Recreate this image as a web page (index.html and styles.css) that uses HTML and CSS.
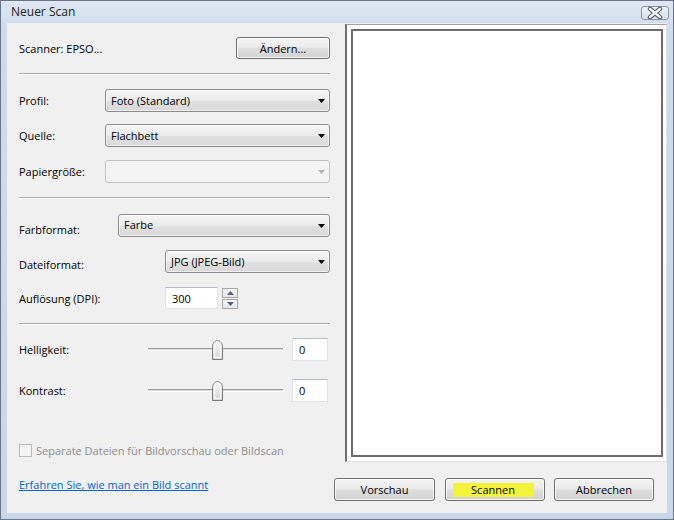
FILE: index.html
```
<!DOCTYPE html>
<html lang="de">
<head>
<meta charset="utf-8">
<title>Neuer Scan</title>
<link rel="stylesheet" href="styles.css">
</head>
<body>
<div class="window">
  <div class="titlebar">
    <span class="title">Neuer Scan</span>
    <span class="close">
      <svg width="28" height="14" viewBox="0 0 28 14">
        <path d="M9 2.8 L19 11.2 M19 2.8 L9 11.2" stroke="#58616d" stroke-width="4.4" stroke-linecap="round"/>
        <path d="M9 2.8 L19 11.2 M19 2.8 L9 11.2" stroke="#ffffff" stroke-width="2.2" stroke-linecap="round"/>
      </svg>
    </span>
  </div>
  <div class="client">
    <div class="main">
      <div class="left">
        <div class="row scanner-row">
          <span class="label">Scanner: EPSO...</span>
          <button class="btn btn-change">Ändern...</button>
        </div>
        <div class="sep sep-a"></div>

        <div class="row row-combo r-profil">
          <span class="label">Profil:</span>
          <div class="combo w-wide"><span class="combo-text">Foto (Standard)</span>
            <svg class="arrow" width="7" height="4" viewBox="0 0 7 4"><path d="M0 0H7L3.5 4Z" fill="#000"/></svg></div>
        </div>
        <div class="row row-combo r-quelle">
          <span class="label">Quelle:</span>
          <div class="combo w-wide"><span class="combo-text">Flachbett</span>
            <svg class="arrow" width="7" height="4" viewBox="0 0 7 4"><path d="M0 0H7L3.5 4Z" fill="#000"/></svg></div>
        </div>
        <div class="row row-combo r-papier">
          <span class="label">Papiergröße:</span>
          <div class="combo combo-disabled w-wide"><span class="combo-text"></span>
            <svg class="arrow" width="7" height="4" viewBox="0 0 7 4"><path d="M0 0H7L3.5 4Z" fill="#b4b4b4"/></svg></div>
        </div>
        <div class="sep sep-b"></div>

        <div class="row row-combo r-farb">
          <span class="label low6">Farbformat:</span>
          <div class="combo w-farb"><span class="combo-text up2">Farbe</span>
            <svg class="arrow" width="7" height="4" viewBox="0 0 7 4"><path d="M0 0H7L3.5 4Z" fill="#000"/></svg></div>
        </div>
        <div class="row row-combo r-datei">
          <span class="label low3">Dateiformat:</span>
          <div class="combo w-datei"><span class="combo-text">JPG (JPEG-Bild)</span>
            <svg class="arrow" width="7" height="4" viewBox="0 0 7 4"><path d="M0 0H7L3.5 4Z" fill="#000"/></svg></div>
        </div>
        <div class="row r-dpi">
          <span class="label dpi-label">Auflösung (DPI):</span>
          <div class="textbox dpi-box">300</div>
          <div class="spinner">
            <span class="spin-btn"><svg width="7" height="4" viewBox="0 0 7 4"><path d="M0 4H7L3.5 0Z" fill="#4d6185"/></svg></span>
            <span class="spin-btn"><svg width="7" height="4" viewBox="0 0 7 4"><path d="M0 0H7L3.5 4Z" fill="#4d6185"/></svg></span>
          </div>
        </div>
        <div class="sep sep-c"></div>

        <div class="row r-hell">
          <span class="label slider-label">Helligkeit:</span>
          <div class="slider">
            <span class="track"></span>
            <svg class="thumb" width="11" height="20" viewBox="0 0 11 20">
              <defs><linearGradient id="tg1" x1="0" x2="0" y1="0" y2="1"><stop offset="0" stop-color="#f7f7f7"/><stop offset="1" stop-color="#d6d6d6"/></linearGradient></defs>
              <path d="M0.5 19.5V6.5C0.5 3.5 3 0.5 5.5 0.5S10.5 3.5 10.5 6.5V19.5Z" fill="url(#tg1)" stroke="#7a7a7a"/>
              <path d="M2.5 17.5V7C2.5 4.8 4 2.6 5.5 2.6S8.5 4.8 8.5 7V17.5Z" fill="none" stroke="#ffffff" stroke-width="1"/>
            </svg>
          </div>
          <div class="textbox val-box">0</div>
        </div>
        <div class="row r-kontrast">
          <span class="label slider-label">Kontrast:</span>
          <div class="slider">
            <span class="track"></span>
            <svg class="thumb" width="11" height="20" viewBox="0 0 11 20">
              <defs><linearGradient id="tg2" x1="0" x2="0" y1="0" y2="1"><stop offset="0" stop-color="#f7f7f7"/><stop offset="1" stop-color="#d6d6d6"/></linearGradient></defs>
              <path d="M0.5 19.5V6.5C0.5 3.5 3 0.5 5.5 0.5S10.5 3.5 10.5 6.5V19.5Z" fill="url(#tg2)" stroke="#7a7a7a"/>
              <path d="M2.5 17.5V7C2.5 4.8 4 2.6 5.5 2.6S8.5 4.8 8.5 7V17.5Z" fill="none" stroke="#ffffff" stroke-width="1"/>
            </svg>
          </div>
          <div class="textbox val-box">0</div>
        </div>

        <div class="row r-check">
          <span class="checkbox"></span>
          <span class="check-label">Separate Dateien für Bildvorschau oder Bildscan</span>
        </div>
      </div>
      <div class="preview">
        <div class="preview-inner"></div>
      </div>
    </div>
    <div class="footer">
      <a class="link" href="#">Erfahren Sie, wie man ein Bild scannt</a>
      <div class="buttons">
        <button class="btn btn-foot b-vor">Vorschau</button>
        <button class="btn btn-foot b-scan"><span class="highlight">Scannen</span></button>
        <button class="btn btn-foot b-abb">Abbrechen</button>
      </div>
    </div>
  </div>
</div>
</body>
</html>
```
FILE: styles.css
```
* { box-sizing: border-box; }

body {
  margin: 0;
  font-family: "Open Sans", "Noto Sans", "DejaVu Sans", sans-serif;
  font-size: 11px;
  color: #000;
  background: #fff;
}

.window {
  width: 674px;
  height: 520px;
  border: 1px solid #6a7684;
  background: linear-gradient(180deg, #dfe8f4 0px, #cddbeb 30px, #c9d7e8 100%);
  display: flex;
  flex-direction: column;
}

.titlebar {
  height: 22px;
  flex: none;
  display: flex;
  align-items: center;
  justify-content: space-between;
  padding-left: 10px;
  padding-right: 4px;
}

.title {
  color: #222;
  font-size: 12px;
  line-height: 16px;
}

.close {
  width: 28px;
  height: 14px;
  margin-top: 1px;
  border: 1px solid #8a96a4;
  border-radius: 3px;
  background: linear-gradient(180deg, #eef2f7, #d6dfea);
  display: flex;
  align-items: center;
  justify-content: center;
}
.close svg { display: block; margin: -1px; }

.client {
  flex: 1;
  margin: 0 6px 6px 6px;
  background: #f0f0f0;
  display: flex;
  flex-direction: column;
}

.main {
  height: 439px;
  flex: none;
  display: flex;
}

.left {
  width: 338px;
  flex: none;
  padding: 14px 15px 0 12px;
  display: flex;
  flex-direction: column;
}

.row {
  display: flex;
  align-items: center;
}

.label {
  line-height: 15px;
  white-space: nowrap;
}
.low6 { margin-top: 8px; }
.low3 { margin-top: 5px; }

.scanner-row {
  height: 22px;
  justify-content: space-between;
}

.btn {
  font-family: inherit;
  font-size: 11px;
  color: #000;
  border: 1px solid #707070;
  border-radius: 3px;
  background: linear-gradient(180deg, #f4f4f4 0%, #ececec 45%, #dedede 52%, #d2d2d2 100%);
  box-shadow: inset 0 0 0 1px rgba(255,255,255,0.75);
  padding: 0;
  display: flex;
  align-items: center;
  justify-content: center;
}

.btn-change {
  width: 94px;
  height: 22px;
}

.sep {
  height: 2px;
  border-top: 1px solid #a9a9a9;
  border-bottom: 1px solid #ffffff;
  flex: none;
}
.sep-a { margin-top: 14px; }
.sep-b { margin-top: 14px; }
.sep-c { margin-top: 14px; }

.row-combo {
  height: 23px;
  justify-content: space-between;
}
.r-profil { margin-top: 14px; }
.r-quelle { margin-top: 12px; }
.r-papier { margin-top: 13px; }
.r-farb { margin-top: 15px; }
.r-datei { margin-top: 13px; }

.combo {
  height: 23px;
  border: 1px solid #8c8c8c;
  border-radius: 3px;
  background: linear-gradient(180deg, #f5f5f5 0%, #ebebeb 50%, #e0e0e0 51%, #d9d9d9 100%);
  box-shadow: inset 0 0 0 1px rgba(255,255,255,0.6);
  display: flex;
  align-items: center;
  justify-content: space-between;
  padding: 0 4px 0 5px;
}
.combo-text { line-height: 15px; white-space: nowrap; }
.combo-text.up2 { margin-top: -3px; }
.combo .arrow { display: block; flex: none; }

.combo-disabled {
  border-color: #c3c3c3;
  background: #f4f4f4;
  box-shadow: none;
}

.w-wide { width: 225px; }
.w-farb { width: 212px; }
.w-datei { width: 165px; }

.r-dpi {
  margin-top: 14px;
  height: 22px;
}
.dpi-label { width: 146px; }

.textbox {
  background: #fff;
  border: 1px solid #dfe3e8;
  border-top-color: #b5b9c0;
  display: flex;
  align-items: center;
  padding-left: 6px;
  line-height: 15px;
}
.dpi-box {
  width: 53px;
  height: 22px;
}

.spinner {
  margin-left: 4px;
  display: flex;
  flex-direction: column;
  gap: 1px;
}
.spin-btn {
  width: 16px;
  height: 10px;
  border: 1px solid #a7a7a7;
  background: linear-gradient(180deg, #f7f7f7, #e6e6e6);
  display: flex;
  align-items: center;
  justify-content: center;
}
.spin-btn svg { display: block; }

.r-hell {
  margin-top: 13px;
  height: 23px;
}
.r-kontrast {
  margin-top: 18px;
  height: 23px;
}
.slider-label { width: 129px; }

.slider {
  position: relative;
  width: 135px;
  height: 20px;
  margin-right: 9px;
}
.track {
  position: absolute;
  left: 0;
  right: 0;
  top: 8px;
  height: 3px;
  border-top: 1px solid #9a9a9a;
  border-bottom: 1px solid #ffffff;
  background: #dadada;
}
.thumb {
  position: absolute;
  left: 64px;
  top: 0;
  display: block;
}

.val-box {
  width: 36px;
  height: 23px;
}

.r-check {
  margin-top: 41px;
  height: 14px;
}
.checkbox {
  width: 13px;
  height: 13px;
  border: 1px solid #b9b9b9;
  background: #f4f4f4;
  flex: none;
}
.check-label {
  margin-left: 4px;
  color: #8d8d8d;
  line-height: 15px;
  white-space: nowrap;
}

.preview {
  width: 322px;
  height: 438px;
  margin-top: 1px;
  background: #fff;
  border-top: 1px solid #a0a0a0;
  border-left: 2px solid #707070;
  border-bottom: 1px solid #e3e3e3;
  border-right: 1px solid #e3e3e3;
  padding: 4px 3px 4px 4px;
  display: flex;
}
.preview-inner {
  flex: 1;
  border: 2px solid #6c6c6c;
  background: #fff;
}

.footer {
  flex: 1;
  display: flex;
  align-items: flex-start;
  padding: 16px 13px 0 12px;
}
.link {
  color: #0066cc;
  text-decoration: underline;
  line-height: 15px;
  white-space: nowrap;
  margin-top: -1px;
}
.buttons {
  margin-left: auto;
  display: flex;
}
.btn-foot {
  height: 23px;
  width: 100px;
}
.b-vor { width: 101px; margin-right: 10px; }
.b-scan { margin-right: 9px; }

.highlight {
  background: #f3f33a;
  padding: 0 19px 0 18px;
  line-height: 14px;
  border-radius: 2px 1px 2px 1px;
  margin-left: -3px;
}
```
